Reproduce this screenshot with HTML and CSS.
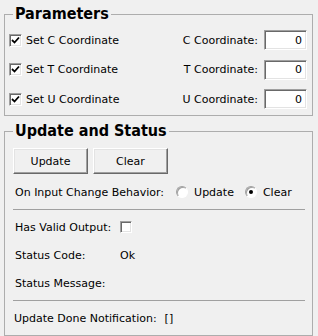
FILE: index.html
```html
<!DOCTYPE html>
<html lang="en">
<head>
  <meta charset="UTF-8">
  <meta name="viewport" content="width=device-width, initial-scale=1.0">
  <title>Parameters</title>
  <link rel="stylesheet" href="styles.css">
</head>
<body>
  <div class="panel">
    <fieldset class="group params">
      <legend>Parameters</legend>
      <div class="param-grid">
        <label class="check-row"><span class="check on"><svg viewBox="0 0 9 9" width="9" height="9"><path d="M1 4 L3.5 6.5 L8 1.5" fill="none" stroke="#000" stroke-width="1.8"/></svg></span>Set C Coordinate</label>
        <label class="coord">C Coordinate:</label>
        <input class="num" type="text" value="0">

        <label class="check-row"><span class="check on"><svg viewBox="0 0 9 9" width="9" height="9"><path d="M1 4 L3.5 6.5 L8 1.5" fill="none" stroke="#000" stroke-width="1.8"/></svg></span>Set T Coordinate</label>
        <label class="coord">T Coordinate:</label>
        <input class="num" type="text" value="0">

        <label class="check-row"><span class="check on"><svg viewBox="0 0 9 9" width="9" height="9"><path d="M1 4 L3.5 6.5 L8 1.5" fill="none" stroke="#000" stroke-width="1.8"/></svg></span>Set U Coordinate</label>
        <label class="coord">U Coordinate:</label>
        <input class="num" type="text" value="0">
      </div>
    </fieldset>

    <fieldset class="group status">
      <legend>Update and Status</legend>
      <div class="buttons">
        <button class="btn">Update</button>
        <button class="btn">Clear</button>
      </div>
      <div class="row behavior">
        <span>On Input Change Behavior:</span>
        <span class="radio first"></span><span class="radio-label">Update</span>
        <span class="radio on"></span><span class="radio-label">Clear</span>
      </div>
      <div class="sep"></div>
      <div class="info">
        <span>Has Valid Output:</span><span class="check"></span>
        <span>Status Code:</span><span>Ok</span>
        <span>Status Message:</span><span></span>
      </div>
      <div class="sep"></div>
      <div class="row notify">
        <span>Update Done Notification:</span>
        <span>[]</span>
      </div>
    </fieldset>
  </div>
</body>
</html>
```

FILE: styles.css
```css
html, body {
  margin: 0;
  padding: 0;
  background: #f0f0f0;
}
body {
  font-family: "DejaVu Sans", Tahoma, sans-serif;
  font-size: 11px;
  color: #000;
}
.panel {
  padding: 4px 5px 0 4px;
}
.group {
  margin: 0;
  border: 1px solid #adadad;
  min-width: 0;
}
.group legend {
  font-family: "DejaVu Sans Condensed", "DejaVu Sans", sans-serif;
  font-weight: bold;
  font-size: 16px;
  line-height: 20px;
  padding: 0 2px;
}
.params {
  padding: 6px 5px 6px 4px;
}
.params legend {
  margin-left: 4px;
}
.param-grid {
  display: grid;
  grid-template-columns: 1fr auto 43px;
  grid-auto-rows: 20px;
  row-gap: 9.5px;
  align-items: center;
}
.check-row {
  display: flex;
  align-items: center;
  gap: 4px;
}
.check {
  width: 9px;
  height: 9px;
  background: #fff;
  border: 1px solid;
  border-color: #a0a0a0 #fff #fff #a0a0a0;
  box-shadow: inset 1px 1px #696969, inset -1px -1px #e3e3e3;
  display: inline-flex;
  align-items: center;
  justify-content: center;
  padding: 1px;
}
.check svg {
  display: block;
}
.coord {
  padding-right: 6px;
  text-align: right;
}
.num {
  box-sizing: border-box;
  width: 43px;
  height: 20px;
  margin: 0;
  font: inherit;
  text-align: right;
  padding: 0 4px 0 0;
  background: #fff;
  border: 1px solid;
  border-color: #a0a0a0 #fff #fff #a0a0a0;
  box-shadow: inset 1px 1px #696969, inset -1px -1px #e3e3e3;
  outline: none;
}
.status {
  margin-top: 5px;
  padding: 7px 7px 7px 8px;
}
.status legend {
  margin-left: 0;
}
.buttons {
  display: flex;
  gap: 5px;
}
.btn {
  width: 75px;
  height: 26px;
  margin: 0;
  font: inherit;
  color: #000;
  background: #f0f0f0;
  border: 1px solid;
  border-color: #fff #696969 #696969 #fff;
  box-shadow: inset -1px -1px #a0a0a0, inset 1px 1px #e3e3e3;
  padding: 0;
}
.row {
  display: flex;
  align-items: center;
  height: 20px;
  padding-left: 2px;
}
.behavior {
  margin-top: 8px;
}
.radio {
  box-sizing: border-box;
  width: 12px;
  height: 12px;
  border-radius: 50%;
  background: #fff;
  border: 1px solid;
  border-color: #a0a0a0 #fff #fff #a0a0a0;
  box-shadow: inset 1px 1px #a0a0a0;
  margin-left: 11px;
  display: inline-flex;
  align-items: center;
  justify-content: center;
}
.radio.first {
  margin-left: 12px;
}
.radio.on::after {
  content: "";
  width: 4px;
  height: 4px;
  border-radius: 50%;
  background: #000;
}
.radio-label {
  margin-left: 6px;
}
.sep {
  height: 1px;
  background: #a0a0a0;
  margin: 7px 0 0;
}
.info {
  display: grid;
  grid-template-columns: 105px 1fr;
  grid-auto-rows: 20px;
  row-gap: 8px;
  align-items: center;
  margin-top: 7px;
  padding-left: 2px;
}
.info .check {
  width: 10px;
  height: 10px;
  padding: 0;
}
.notify {
  margin-top: 7px;
  gap: 8px;
  padding-left: 1px;
}
```
